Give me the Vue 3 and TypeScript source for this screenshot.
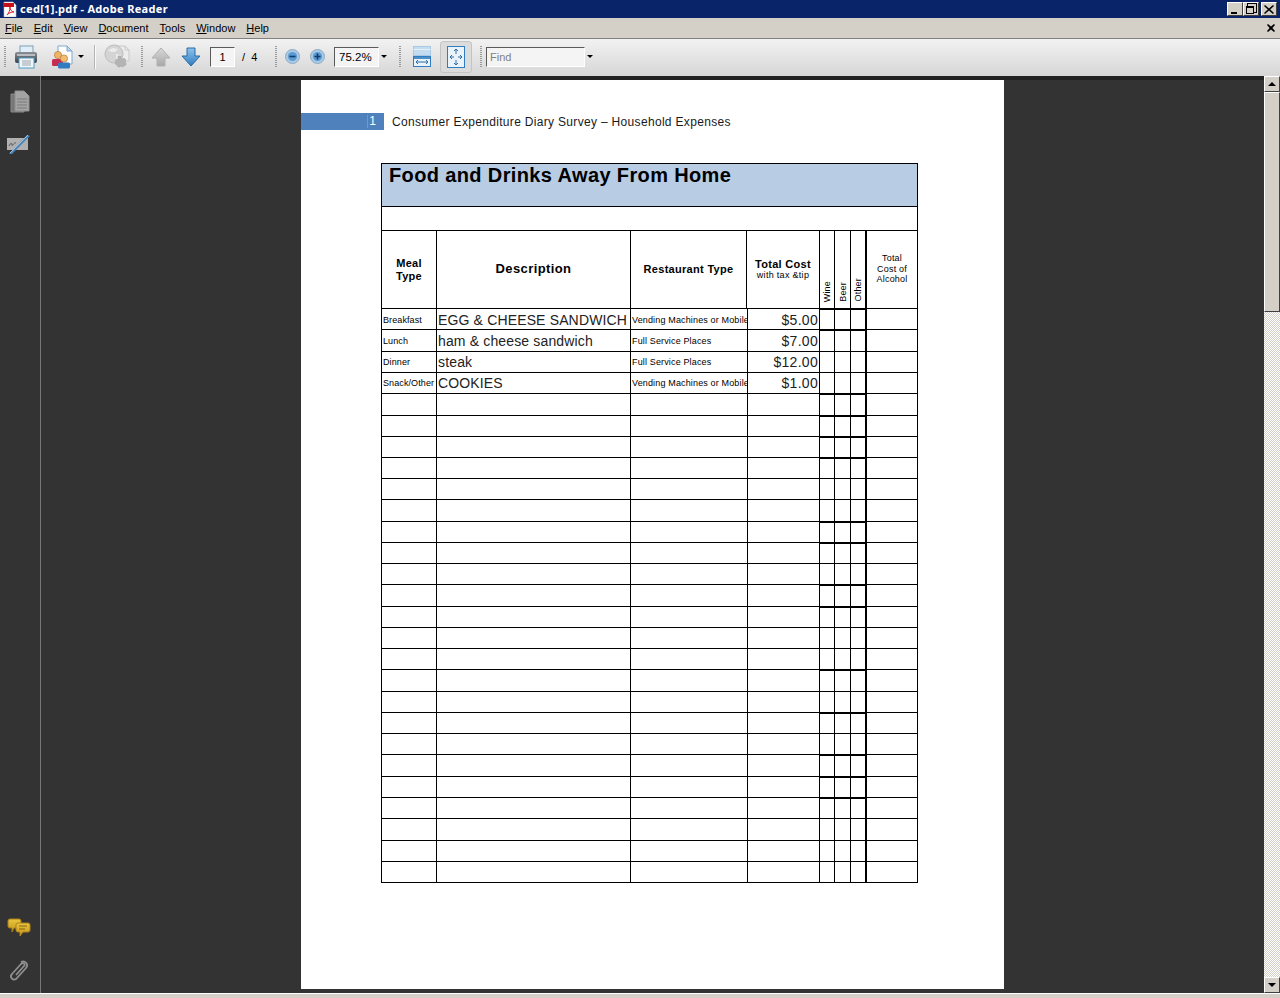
<template>
  <div class="reader">
    <header class="titlebar">
      <svg class="app-icon" width="16" height="16" viewBox="0 0 16 16">
        <path d="M2 1h9l3 3v12H2z" fill="#fff" stroke="#bbb" stroke-width=".6" />
        <rect x="1" y="2" width="11" height="4" fill="#c8101a" />
        <path d="M5 14c2-2 3-5 3-8 0 3 1 4 4 5-3 0-5 1-7 3z" fill="none" stroke="#d8242a" stroke-width="1" />
      </svg>
      <span class="title-text">ced[1].pdf - Adobe Reader</span>
      <div class="win-buttons">
        <button class="win-btn"><span class="glyph-min"></span></button>
        <button class="win-btn"><span class="glyph-restore"></span></button>
        <button class="win-btn close">
          <svg width="10" height="9" viewBox="0 0 10 9"><path d="M1 0l4 3.4L9 0l1 1-3.8 3.5L10 8 9 9 5 5.6 1 9 0 8l3.8-3.5L0 1z" fill="#000" /></svg>
        </button>
      </div>
    </header>

    <nav class="menubar">
      <span v-for="m in menus" :key="m.rest" class="menu-item"><u>{{ m.key }}</u>{{ m.rest }}</span>
      <svg class="menu-close" width="8" height="8" viewBox="0 0 8 8"><path d="M0 1l1-1 3 2.6L7 0l1 1-2.6 3L8 7 7 8 4 5.4 1 8 0 7l2.6-3L0 1z" fill="#000" /></svg>
    </nav>

    <div class="toolbar">
      <i class="grip g1"></i>
      <svg class="ic print" width="24" height="24" viewBox="0 0 24 24">
        <defs>
          <linearGradient id="prn" x1="0" y1="0" x2="0" y2="1"><stop offset="0" stop-color="#8b9096" /><stop offset="1" stop-color="#3c4146" /></linearGradient>
          <linearGradient id="blue" x1="0" y1="0" x2="0" y2="1"><stop offset="0" stop-color="#8fc3ec" /><stop offset="1" stop-color="#2f7cc0" /></linearGradient>
          <linearGradient id="grey" x1="0" y1="0" x2="0" y2="1"><stop offset="0" stop-color="#d8d8d8" /><stop offset="1" stop-color="#a8a8a8" /></linearGradient>
          <linearGradient id="gold" x1="0" y1="0" x2="0" y2="1"><stop offset="0" stop-color="#e8c63e" /><stop offset="1" stop-color="#c2951c" /></linearGradient>
        </defs>
        <rect x="6" y="1" width="13" height="8" fill="#dfeef8" stroke="#7d9fb8" />
        <rect x="1" y="7" width="22" height="11" rx="2" fill="url(#prn)" />
        <rect x="3" y="9" width="18" height="2" fill="#b9bdc2" />
        <rect x="5" y="13" width="15" height="10" fill="#f2f6f9" stroke="#4d9cc8" />
        <path d="M8 16h9M8 18h9M8 20h9" stroke="#9aa4ac" />
      </svg>
      <svg class="ic share" width="22" height="24" viewBox="0 0 22 24">
        <path d="M7 1h9l5 5v13H7z" fill="#fff" stroke="#7da7cf" />
        <path d="M16 1v5h5z" fill="#bcd8f0" stroke="#7da7cf" />
        <circle cx="7" cy="10" r="3.6" fill="#f0b468" stroke="#b97a32" stroke-width=".7" />
        <rect x="1" y="14" width="11" height="7" rx="1.5" fill="#c62b52" />
        <circle cx="13" cy="13.5" r="3.6" fill="#f4bd73" stroke="#b97a32" stroke-width=".7" />
        <rect x="7" y="17.5" width="12" height="6" rx="1.5" fill="#2f7cc0" />
      </svg>
      <i class="caret c-share"></i>
      <i class="sep"></i>
      <svg class="ic globe" width="26" height="25" viewBox="0 0 26 25">
        <path d="M11 2h10l4 4v11H14z" fill="#ededed" stroke="#c8c8c8" />
        <path d="M21 2v4h4" fill="none" stroke="#c8c8c8" />
        <circle cx="10" cy="10" r="9" fill="#d4d4d4" stroke="#bcbcbc" />
        <path d="M4 6l5-2 5 1-3 3H7zM12 10l5 1v4l-3 2-2-3z" fill="#ececec" />
        <path d="M17 13h3v2l2 1 1-1 2 2-1 2 1 1v2l-2 1-1 1-2-1-1 1h-2l-1-2-2-1 1-2-1-1 2-2 1 1z" transform="translate(-3 -1)" fill="#b4b4b4" stroke="#a4a4a4" stroke-width=".5" />
      </svg>
      <i class="grip g2"></i>
      <svg class="ic up" width="20" height="20" viewBox="0 0 20 20">
        <path d="M10 1l9 10h-5v8H6v-8H1z" fill="url(#grey)" stroke="#b0b0b0" />
      </svg>
      <svg class="ic down" width="20" height="20" viewBox="0 0 20 20">
        <path d="M10 19L1 9h5V1h8v8h5z" fill="url(#blue)" stroke="#2a6aa6" />
      </svg>
      <span class="field page-field">1</span>
      <span class="page-total">/&nbsp;&nbsp;4</span>
      <i class="grip g3"></i>
      <svg class="ic minus" width="15" height="15" viewBox="0 0 15 15">
        <circle cx="7.5" cy="7.5" r="7" fill="#a9cbe8" stroke="#8fa9c0" />
        <circle cx="7.5" cy="7.5" r="4.6" fill="#5b9bd2" />
        <path d="M4.5 7.5h6" stroke="#123a6b" stroke-width="1.6" />
      </svg>
      <svg class="ic plus" width="15" height="15" viewBox="0 0 15 15">
        <circle cx="7.5" cy="7.5" r="7" fill="#a9cbe8" stroke="#8fa9c0" />
        <circle cx="7.5" cy="7.5" r="4.6" fill="#5b9bd2" />
        <path d="M4.5 7.5h6M7.5 4.5v6" stroke="#123a6b" stroke-width="1.6" />
      </svg>
      <span class="field zoom-field">75.2%</span>
      <i class="caret c-zoom"></i>
      <i class="grip g4"></i>
      <svg class="ic fit-width" width="18" height="22" viewBox="0 0 18 22">
        <rect x=".5" y=".5" width="17" height="9" fill="#c4dcf0" stroke="#a8c8e4" />
        <rect x=".5" y="3" width="17" height="1" fill="#e4eff8" />
        <rect x=".5" y="10.5" width="17" height="10" fill="#eaf3fa" stroke="#2f7cc0" />
        <rect x="1" y="11" width="16" height="2" fill="#4d8fc8" />
        <path d="M3 16h12M3 16l2-2M3 16l2 2M15 16l-2-2M15 16l-2 2" stroke="#2f6da8" fill="none" />
      </svg>
      <div class="fit-page">
        <svg width="18" height="22" viewBox="0 0 18 22">
          <rect x=".5" y=".5" width="17" height="21" fill="#eaf3fa" stroke="#2f7cc0" />
          <path d="M9 3v5M7 5l2-2 2 2M9 19v-5M7 17l2 2 2-2M3 11h4M5 9l-2 2 2 2M15 11h-4M13 9l2 2-2 2" stroke="#2f6da8" fill="none" />
        </svg>
      </div>
      <i class="grip g5"></i>
      <span class="field find-field">Find</span>
      <i class="caret c-find"></i>
    </div>

    <div class="workspace">
      <aside class="sidebar">
        <svg class="side-ic" width="20" height="23" viewBox="0 0 20 23">
          <path d="M1 4h13v18H1z" fill="#777" stroke="#8a8a8a" />
          <path d="M5 1h9l5 5v15H5z" fill="#a4a4a4" stroke="#8f8f8f" />
          <path d="M7 9h10M7 12h10M7 15h10M7 18h10" stroke="#7a7a7a" />
        </svg>
        <svg class="side-ic sign" width="24" height="22" viewBox="0 0 24 22">
          <rect x="0" y="5" width="21" height="12" fill="#b0b0b0" />
          <path d="M2 13c2-4 3-3 3-1s2-3 4-2" stroke="#555" fill="none" />
          <path d="M2 21L20 2l3 1L5 21z" fill="#4c84b4" />
          <path d="M3 20L21 2" stroke="#9cc3e4" />
        </svg>
        <div class="side-spacer"></div>
        <svg class="side-ic comments" width="24" height="19" viewBox="0 0 24 19">
          <path d="M3 1h9a2 2 0 0 1 2 2v5a2 2 0 0 1-2 2H7l-2 4v-4H3a2 2 0 0 1-2-2V3a2 2 0 0 1 2-2z" fill="url(#gold)" stroke="#a87c18" />
          <path d="M11 5h10a2 2 0 0 1 2 2v5a2 2 0 0 1-2 2h-5l-3 4v-4h-2a2 2 0 0 1-2-2V7a2 2 0 0 1 2-2z" fill="url(#gold)" stroke="#b0801a" />
          <path d="M12 8h8M12 11h6" stroke="#8a6410" />
        </svg>
        <svg class="side-ic clip" width="22" height="24" viewBox="0 0 22 24">
          <path d="M8 16l8-9c2-2-1-4-3-2L4 15c-3 3 1 7 4 5L18 9c3-4-1-8-5-6" fill="none" stroke="#8e8e8e" stroke-width="1.8" />
        </svg>
      </aside>

      <main class="viewer">
        <article class="page">
          <div class="page-head">
            <div class="page-tab"><span>1</span></div>
            <span class="page-heading">Consumer Expenditure Diary Survey – Household Expenses</span>
          </div>
          <section class="form">
            <div class="form-title">Food and Drinks Away From Home</div>
            <div class="form-blank"></div>
            <div class="row head">
              <div class="cell th th-small">Meal<br />Type</div>
              <div class="cell th th-big">Description</div>
              <div class="cell th th-rest">Restaurant Type</div>
              <div class="cell th th-total">
                <b>Total Cost</b>
                <small>with tax &amp;tip</small>
              </div>
              <div class="cell vert"><span>Wine</span></div>
              <div class="cell vert"><span>Beer</span></div>
              <div class="cell vert last"><span>Other</span></div>
              <div class="cell alcohol">Total<br />Cost of<br />Alcohol</div>
            </div>
            <div v-for="(r, i) in rows" :key="i" class="row body" :style="{ height: r.height + 'px' }">
              <div class="cell meal">{{ r.meal }}</div>
              <div class="cell desc">{{ r.desc }}</div>
              <div class="cell type">{{ r.type }}</div>
              <div class="cell cost">{{ r.cost }}</div>
              <div class="cell" :class="{ thick: r.thick }"></div>
              <div class="cell" :class="{ thick: r.thick }"></div>
              <div class="cell last" :class="{ thick: r.thick }"></div>
              <div class="cell"></div>
            </div>
          </section>
        </article>
      </main>

      <div class="scrollbar">
        <button class="sb-btn"><i class="tri-up"></i></button>
        <div class="sb-thumb"></div>
        <div class="sb-track"></div>
        <button class="sb-btn"><i class="tri-down"></i></button>
      </div>
    </div>

    <footer class="statusbar"></footer>
  </div>
</template>

<script setup lang="ts">
interface Entry {
  meal: string
  desc: string
  type: string
  cost: string
}

const menus = [
  { key: 'F', rest: 'ile' },
  { key: 'E', rest: 'dit' },
  { key: 'V', rest: 'iew' },
  { key: 'D', rest: 'ocument' },
  { key: 'T', rest: 'ools' },
  { key: 'W', rest: 'indow' },
  { key: 'H', rest: 'elp' }
]

const entries: Entry[] = [
  { meal: 'Breakfast', desc: 'EGG & CHEESE SANDWICH', type: 'Vending Machines or Mobile', cost: '$5.00' },
  { meal: 'Lunch', desc: 'ham & cheese sandwich', type: 'Full Service Places', cost: '$7.00' },
  { meal: 'Dinner', desc: 'steak', type: 'Full Service Places', cost: '$12.00' },
  { meal: 'Snack/Other', desc: 'COOKIES', type: 'Vending Machines or Mobile', cost: '$1.00' }
]

// y of every ruled line in the form, the rows are what lies between them
const lines = [308, 329, 351, 372, 393, 415, 436, 457, 478, 499, 521, 542, 563, 584, 606, 627, 648, 669, 691, 712, 733, 754, 776, 797, 818, 840, 861, 882]
const thickTops = new Set([0, 1, 4, 5, 6, 7, 10, 11, 13, 14, 17, 19, 21, 22, 23])

const rows = lines.slice(1).map((y, i) => ({
  height: y - lines[i],
  thick: thickTops.has(i),
  meal: entries[i]?.meal ?? '',
  desc: entries[i]?.desc ?? '',
  type: entries[i]?.type ?? '',
  cost: entries[i]?.cost ?? ''
}))
</script>

<style>
html,
body {
  margin: 0;
  overflow: hidden;
}
</style>

<style scoped>
.reader {
  width: 1280px;
  height: 998px;
  display: flex;
  flex-direction: column;
  overflow: hidden;
  background: #d4d0c8;
  font-family: "Liberation Sans", sans-serif;
}

.titlebar {
  height: 18px;
  flex: none;
  display: flex;
  align-items: center;
  background: #0a246a;
  color: #fff;
  padding-left: 2px;
  box-sizing: border-box;
}
.app-icon {
  flex: none;
}
.title-text {
  margin-left: 2px;
  margin-bottom: 1px;
  font-family: "Noto Sans", sans-serif;
  font-size: 11px;
  font-weight: 700;
  letter-spacing: 0.32px;
}
.win-buttons {
  margin-left: auto;
  margin-right: 3px;
  display: flex;
}
.win-btn {
  width: 16px;
  height: 14px;
  padding: 0;
  background: #d4d0c8;
  border: 1px solid;
  border-color: #fff #404040 #404040 #fff;
  display: flex;
  align-items: center;
  justify-content: center;
}
.win-btn.close {
  margin-left: 2px;
}
.glyph-min {
  width: 6px;
  height: 2px;
  background: #000;
  margin-top: 7px;
  margin-right: 2px;
}
.glyph-restore {
  width: 6px;
  height: 5px;
  border: 1px solid #000;
  border-top-width: 2px;
  box-shadow: 2px -2px 0 0 #d4d0c8, 2px -2px 0 1px #000;
  margin-top: 2px;
  margin-right: 2px;
  background: #d4d0c8;
}

.menubar {
  height: 20px;
  flex: none;
  display: flex;
  align-items: center;
  gap: 11px;
  padding-left: 5px;
  background: #d4d0c8;
  font-size: 11px;
  color: #000;
  box-sizing: border-box;
}
.menu-close {
  margin-left: auto;
  margin-right: 5px;
}

.toolbar {
  height: 38px;
  flex: none;
  display: flex;
  align-items: center;
  box-sizing: border-box;
  border-top: 1px solid #808080;
  padding-bottom: 2px;
  background: linear-gradient(#f2f2f2, #d6d6d6);
  font-size: 11px;
  color: #000;
}
.grip {
  width: 2px;
  height: 22px;
  flex: none;
  background: repeating-linear-gradient(#9a9a9a 0 1px, transparent 1px 2px);
}
.g1 { margin-left: 4px; }
.print { margin-left: 8px; }
.share { margin-left: 13px; }
.ic { flex: none; }
.caret {
  width: 0;
  height: 0;
  flex: none;
  border: 3px solid transparent;
  border-top: 3px solid #000;
  border-bottom: 0;
}
.c-share { margin-left: 5px; }
.sep {
  width: 1px;
  height: 24px;
  flex: none;
  margin-left: 10px;
  background: #b4b4b4;
  box-shadow: 1px 0 0 #fafafa;
}
.globe { margin-left: 9px; }
.g2 { margin-left: 11px; }
.up { margin-left: 8px; }
.down { margin-left: 10px; }
.field {
  flex: none;
  box-sizing: border-box;
  height: 20px;
  display: flex;
  align-items: center;
  border: 1px solid;
  border-color: #5a5a5a #fff #fff #5a5a5a;
  background: #f4f4f4;
}
.page-field {
  width: 25px;
  margin-left: 9px;
  justify-content: center;
  font-size: 11px;
}
.page-total {
  margin-left: 7px;
  font-size: 11px;
  width: 16px;
  white-space: nowrap;
}
.g3 { margin-left: 17px; }
.minus { margin-left: 8px; }
.plus { margin-left: 10px; }
.zoom-field {
  width: 45px;
  margin-left: 9px;
  padding-left: 4px;
  font-size: 11.5px;
}
.c-zoom { margin-left: 2px; }
.g4 { margin-left: 12px; }
.fit-width { margin-left: 12px; }
.fit-page {
  flex: none;
  width: 32px;
  height: 32px;
  margin-left: 9px;
  box-sizing: border-box;
  border: 1px solid #c4c4c4;
  border-radius: 3px;
  background: #dcdcdc;
  display: flex;
  align-items: center;
  justify-content: center;
}
.g5 { margin-left: 8px; }
.find-field {
  width: 99px;
  margin-left: 4px;
  padding-left: 3px;
  color: #808080;
  font-size: 11px;
}
.c-find { margin-left: 2px; }

.workspace {
  flex: 1;
  min-height: 0;
  display: flex;
  background: #333;
}
.sidebar {
  width: 41px;
  flex: none;
  box-sizing: border-box;
  border-right: 1px solid #777;
  display: flex;
  flex-direction: column;
  align-items: center;
  padding: 14px 0 10px;
  background: #333;
}
.side-ic { flex: none; }
.sign { margin-top: 20px; margin-left: -2px; }
.side-spacer { flex: 1; }
.comments { margin-bottom: 22px; margin-left: -3px; }
.clip { margin-left: -3px; }

.viewer {
  flex: 1;
  min-width: 0;
  padding: 4px 0 4px 260px;
  box-sizing: border-box;
  background: linear-gradient(#222 0 4px, #333 4px);
}
.page {
  width: 703px;
  height: 909px;
  background: #fff;
  box-sizing: border-box;
  padding-top: 33px;
}
.page-head {
  height: 17px;
  display: flex;
  align-items: center;
}
.page-tab {
  width: 83px;
  height: 17px;
  flex: none;
  box-sizing: border-box;
  background: #4f81bd;
  color: #fff;
  display: flex;
  align-items: center;
  justify-content: flex-end;
  padding-right: 8px;
  font-size: 12px;
}
.page-tab span {
  border-left: 1px solid #a88a80;
  padding-left: 1px;
  line-height: 13px;
}
.page-heading {
  margin-left: 8px;
  font-size: 12px;
  letter-spacing: 0.32px;
  color: #1a1a1a;
  white-space: nowrap;
}
.form {
  width: 537px;
  margin: 33px 0 0 80px;
  box-sizing: border-box;
  border: 1px solid #000;
  border-bottom: 0;
  color: #000;
}
.form-title {
  height: 43px;
  box-sizing: border-box;
  background: #b8cce4;
  border-bottom: 1px solid #000;
  padding-left: 7px;
  font-size: 20px;
  font-weight: 700;
  line-height: 23px;
  letter-spacing: 0.37px;
  white-space: nowrap;
}
.form-blank {
  height: 24px;
  box-sizing: border-box;
  border-bottom: 1px solid #000;
}
.row {
  display: grid;
  grid-template-columns: 55px 194px 117px 72px 15px 16px 16px 50px;
  box-sizing: border-box;
  border-bottom: 1px solid #000;
}
.row.head {
  height: 78px;
  grid-template-columns: 55px 194px 116px 73px 15px 16px 16px 50px;
}
.row.body:nth-child(4) .cell {
  padding-top: 1px;
}
.cell {
  box-sizing: border-box;
  border-right: 1px solid #000;
  min-width: 0;
  display: flex;
  align-items: center;
  overflow: hidden;
  white-space: nowrap;
}
.cell:last-child {
  border-right: 0;
}
.cell.last {
  border-right-width: 2px;
}
.cell.thick {
  box-shadow: inset 0 1px 0 #000;
}
.th {
  justify-content: center;
  text-align: center;
  font-weight: 700;
}
.th-small {
  font-size: 11px;
  line-height: 13px;
  letter-spacing: 0.3px;
}
.th-rest {
  font-size: 11px;
  letter-spacing: 0.3px;
  padding-bottom: 2px;
}
.th-big {
  font-size: 13px;
  letter-spacing: 0.4px;
  padding-bottom: 2px;
}
.th-total {
  flex-direction: column;
  font-size: 11px;
  letter-spacing: 0.3px;
  padding-bottom: 2px;
}
.th-total small {
  font-size: 9px;
  font-weight: 400;
  letter-spacing: 0.3px;
  line-height: 10px;
}
.vert {
  justify-content: center;
  align-items: flex-end;
  padding-bottom: 6px;
  font-size: 9px;
}
.vert span {
  writing-mode: vertical-rl;
  transform: rotate(180deg);
  letter-spacing: 0.2px;
}
.alcohol {
  justify-content: center;
  text-align: center;
  font-size: 9px;
  line-height: 10.5px;
  letter-spacing: 0.2px;
  padding-bottom: 1px;
}
.meal {
  font-size: 9px;
  padding-left: 1px;
  letter-spacing: 0.1px;
}
.desc {
  font-size: 14px;
  padding-left: 1px;
  letter-spacing: 0.15px;
  color: #222;
}
.type {
  font-size: 9px;
  padding-left: 1px;
  letter-spacing: 0.15px;
}
.cost {
  font-size: 14px;
  justify-content: flex-end;
  padding-right: 1px;
  letter-spacing: 0.3px;
  color: #222;
}

.scrollbar {
  width: 16px;
  flex: none;
  display: flex;
  flex-direction: column;
}
.sb-btn {
  width: 16px;
  height: 16px;
  flex: none;
  padding: 0;
  box-sizing: border-box;
  background: #d4d0c8;
  border: 1px solid;
  border-color: #fff #404040 #404040 #fff;
  display: flex;
  align-items: center;
  justify-content: center;
}
.tri-up,
.tri-down {
  width: 0;
  height: 0;
  border: 4px solid transparent;
}
.tri-up {
  border-bottom-color: #000;
  border-top: 0;
}
.tri-down {
  border-top-color: #000;
  border-bottom: 0;
}
.sb-thumb {
  height: 220px;
  flex: none;
  box-sizing: border-box;
  background: #d4d0c8;
  border: 1px solid;
  border-color: #fff #404040 #404040 #fff;
}
.sb-track {
  flex: 1;
  background-color: #fff;
  background-image: conic-gradient(#d4d0c8 25%, #fff 0 50%, #d4d0c8 0 75%, #fff 0);
  background-size: 2px 2px;
}
.statusbar {
  height: 5px;
  flex: none;
  box-sizing: border-box;
  background: #d4d0c8;
  border-top: 1px solid #fff;
}
</style>
